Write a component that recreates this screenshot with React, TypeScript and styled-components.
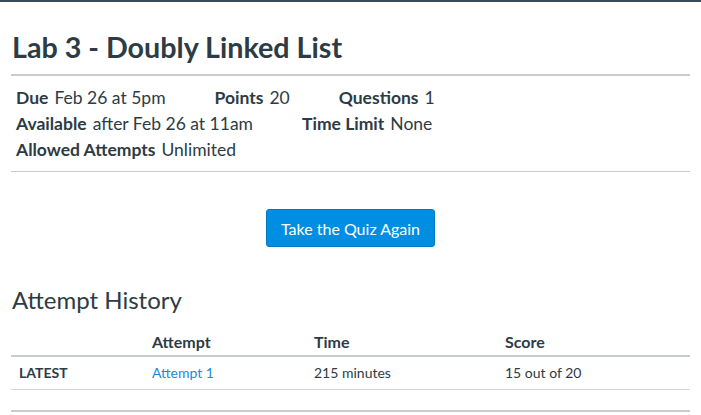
import React from "react";
import styled, { createGlobalStyle } from "styled-components";

const Global = createGlobalStyle`
  html, body { margin: 0; padding: 0; background: #fff; }
  body { font-family: Lato, "Open Sans", sans-serif; color: #2d3b45; }
  * { box-sizing: border-box; }
`;

const TopBar = styled.div`
  height: 2px;
  background: #394b58;
`;

const Page = styled.main`
  width: 701px;
  padding: 0 11px;
`;

const Title = styled.h1`
  margin: 0;
  padding: 28px 0 0 1px;
  height: 74px;
  font-size: 28.7px;
  font-weight: 700;
  line-height: 34px;
  color: #2d3b45;
  border-bottom: 2px solid #c7cdd1;
`;

const Summary = styled.div`
  padding: 8px 5px 9px;
  border-bottom: 1px solid #c7cdd1;
`;

const SummaryRow = styled.div`
  display: flex;
  gap: 49px;
  height: 26px;
  align-items: center;
`;

const Item = styled.div`
  font-size: 17.5px;
  white-space: nowrap;
`;

const Label = styled.span`
  font-weight: 700;
  margin-right: 6px;
`;

const ButtonRow = styled.div`
  display: flex;
  justify-content: center;
  padding-top: 37px;
`;

const Button = styled.button`
  font-family: Lato, sans-serif;
  font-size: 16px;
  color: #fff;
  background: #008ee2;
  border: 1px solid #0079c1;
  border-radius: 3px;
  height: 38px;
  padding: 0 14px;
  cursor: pointer;
`;

const SectionTitle = styled.h2`
  margin: 0;
  padding: 39px 0 0 1px;
  font-size: 24px;
  font-weight: 400;
  line-height: 28px;
  color: #2d3b45;
`;

const Table = styled.div`
  margin-top: 14px;
  border-bottom: 2px solid #c7cdd1;
  padding-bottom: 20px;
`;

const Row = styled.div<{ $head?: boolean }>`
  display: grid;
  grid-template-columns: 133px 162px 191px 1fr;
  align-items: center;
  height: ${(p) => (p.$head ? "29px" : "33px")};
  padding-bottom: ${(p) => (p.$head ? "0" : "2px")};
  border-bottom: ${(p) => (p.$head ? "2px solid #c7cdd1" : "1px solid #d5d9dc")};
  font-size: ${(p) => (p.$head ? "16px" : "14px")};
  font-weight: ${(p) => (p.$head ? 700 : 400)};
`;

const Cell = styled.div`
  padding: 0 8px;
`;

const Tag = styled(Cell)`
  font-size: 14px;
  font-weight: 700;
  text-transform: uppercase;
`;

const Link = styled.a`
  color: #2189dd;
  text-decoration: none;
`;

export default function App() {
  return (
    <>
      <Global />
      <TopBar />
      <Page>
        <Title>Lab 3 - Doubly Linked List</Title>
        <Summary>
          <SummaryRow>
            <Item><Label>Due</Label>Feb 26 at 5pm</Item>
            <Item><Label>Points</Label>20</Item>
            <Item><Label>Questions</Label>1</Item>
          </SummaryRow>
          <SummaryRow>
            <Item><Label>Available</Label>after Feb 26 at 11am</Item>
            <Item><Label>Time Limit</Label>None</Item>
          </SummaryRow>
          <SummaryRow>
            <Item><Label>Allowed Attempts</Label>Unlimited</Item>
          </SummaryRow>
        </Summary>
        <ButtonRow>
          <Button>Take the Quiz Again</Button>
        </ButtonRow>
        <SectionTitle>Attempt History</SectionTitle>
        <Table>
          <Row $head>
            <Cell />
            <Cell>Attempt</Cell>
            <Cell>Time</Cell>
            <Cell>Score</Cell>
          </Row>
          <Row>
            <Tag>Latest</Tag>
            <Cell><Link href="#">Attempt 1</Link></Cell>
            <Cell>215 minutes</Cell>
            <Cell>15 out of 20</Cell>
          </Row>
        </Table>
      </Page>
    </>
  );
}
